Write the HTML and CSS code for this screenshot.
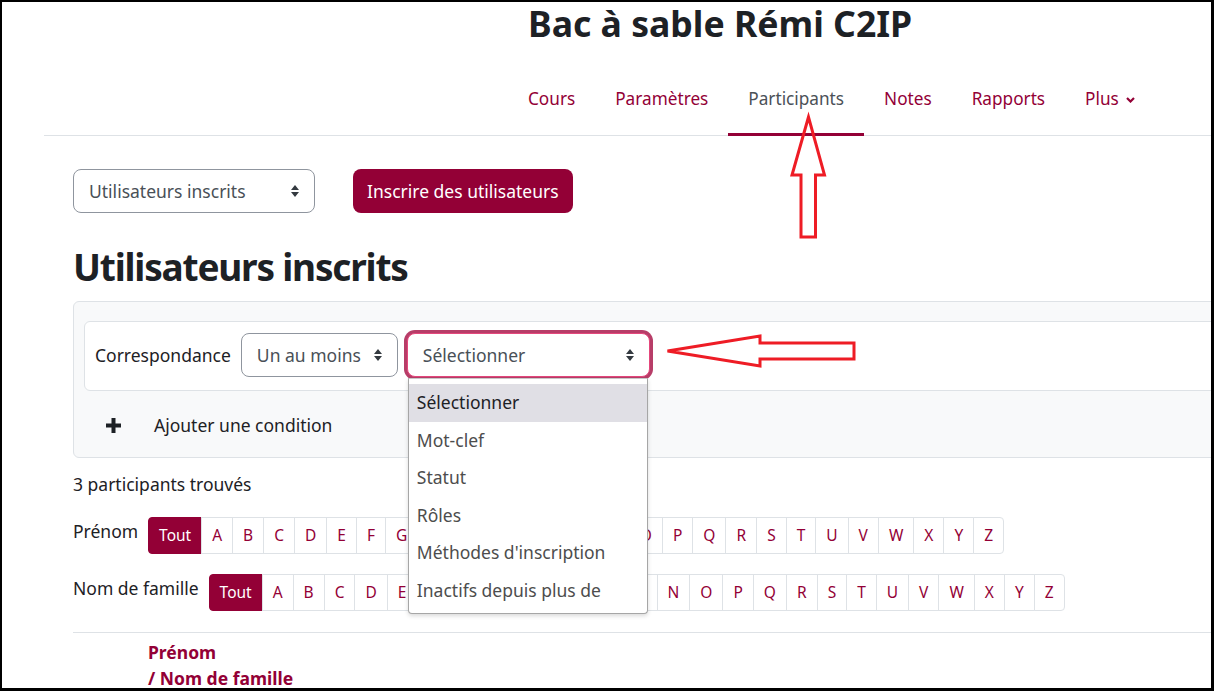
FILE: index.html
```html
<!DOCTYPE html>
<html lang="fr">
<head>
  <meta charset="UTF-8">
  <title>Participants : Bac à sable Rémi C2IP</title>
  <link rel="stylesheet" href="styles.css">
</head>
<body>
  <div class="frame">
    <header class="page-header">
      <h1>Bac à sable Rémi C2IP</h1>
      <nav class="secondary-nav">
        <a href="#">Cours</a>
        <a href="#">Paramètres</a>
        <a href="#" class="active">Participants</a>
        <a href="#">Notes</a>
        <a href="#">Rapports</a>
        <a href="#">Plus <svg class="chevron" width="9" height="6" viewBox="0 0 9 6"><path d="M1 1l3.5 3.5L8 1" fill="none" stroke="currentColor" stroke-width="2.2"/></svg></a>
      </nav>
    </header>

    <main class="content">
      <div class="toolbar">
        <div class="select select-enrol">Utilisateurs inscrits <svg class="updown" width="8" height="12" viewBox="0 0 8 12"><path d="M0 5L4 0l4 5zM0 7h8l-4 5z"/></svg></div>
        <button class="btn-primary">Inscrire des utilisateurs</button>
      </div>

      <h2>Utilisateurs inscrits</h2>

      <div class="filter-panel">
        <div class="filter-row">
          <span class="filter-label">Correspondance</span>
          <div class="select select-match">Un au moins <svg class="updown" width="8" height="12" viewBox="0 0 8 12"><path d="M0 5L4 0l4 5zM0 7h8l-4 5z"/></svg></div>
          <div class="select-wrap">
            <div class="select select-type focused">Sélectionner <svg class="updown" width="8" height="12" viewBox="0 0 8 12"><path d="M0 5L4 0l4 5zM0 7h8l-4 5z"/></svg></div>
            <ul class="dropdown">
              <li class="hover">Sélectionner</li>
              <li>Mot-clef</li>
              <li>Statut</li>
              <li>Rôles</li>
              <li>Méthodes d'inscription</li>
              <li>Inactifs depuis plus de</li>
            </ul>
          </div>
        </div>
        <div class="add-row">
          <svg class="plus" width="15" height="15" viewBox="0 0 15 15"><path d="M5.5 0h4v5.5H15v4H9.5V15h-4V9.5H0v-4h5.5z"/></svg>
          <span>Ajouter une condition</span>
        </div>
      </div>

      <p class="count">3 participants trouvés</p>

      <div class="initialbar">
        <span class="bar-label">Prénom</span>
        <ul class="letters">
          <li class="current">Tout</li><li>A</li><li>B</li><li>C</li><li>D</li><li>E</li><li>F</li><li>G</li><li>H</li><li>I</li><li>J</li><li>K</li><li>L</li><li>M</li><li>N</li><li>O</li><li>P</li><li>Q</li><li>R</li><li>S</li><li>T</li><li>U</li><li>V</li><li>W</li><li>X</li><li>Y</li><li>Z</li>
        </ul>
      </div>
      <div class="initialbar">
        <span class="bar-label">Nom de famille</span>
        <ul class="letters">
          <li class="current">Tout</li><li>A</li><li>B</li><li>C</li><li>D</li><li>E</li><li>F</li><li>G</li><li>H</li><li>I</li><li>J</li><li>K</li><li>L</li><li>M</li><li>N</li><li>O</li><li>P</li><li>Q</li><li>R</li><li>S</li><li>T</li><li>U</li><li>V</li><li>W</li><li>X</li><li>Y</li><li>Z</li>
        </ul>
      </div>

      <div class="table-head">
        <a href="#">Prénom</a><br>
        / <a href="#">Nom de famille</a>
      </div>
    </main>

    <!-- annotations drawn over the screenshot -->
    <svg class="annotations" width="1214" height="691" viewBox="0 0 1214 691">
      <path d="M808.5 117L792 175H801V237H815.5V175H824.5Z" />
      <path d="M667.5 351L760 336V343H854V359H760V366Z" />
    </svg>
  </div>
</body>
</html>
```

FILE: styles.css
```css
* { box-sizing: border-box; }
body {
  margin: 0;
  background: #fff;
  font-family: "Noto Sans", "Open Sans", sans-serif;
  font-size: 17.5px;
  line-height: 27px;
  color: #1d2125;
}
a { color: #930036; text-decoration: none; }

.frame {
  position: relative;
  width: 1214px; height: 691px;
  border: solid #000; border-width: 2px 3px 3px 2px;
  overflow: hidden;
}

/* header + secondary navigation */
.page-header {
  margin-left: 42px;
  padding-left: 484px;
  border-bottom: 1px solid #dee2e6;
}
.page-header h1 {
  margin: 0;
  font-size: 35.6px; line-height: 42px; font-weight: 700;
}
.secondary-nav { display: flex; margin: 31px 0 -1px -20px; font-size: 17.2px; }
.secondary-nav a {
  padding: 10px 20px 21px;
  border-bottom: 3px solid transparent;
}
.secondary-nav a.active { color: #4b5157; border-bottom-color: #930036; }
.chevron { margin-left: 3px; vertical-align: 2px; }

/* page body */
.content { margin-left: 71px; width: 1250px; padding-top: 33px; }
.toolbar { display: flex; gap: 38px; }

.select {
  display: flex; align-items: center; justify-content: space-between;
  height: 44px; padding: 0 15px;
  border: 1px solid #8f959e; border-radius: 8px;
  background: #fff; color: #495057;
}
.updown { fill: #343a40; flex-shrink: 0; }
.select-enrol { width: 242px; }
.select-match { width: 157px; }
.select-type { width: 243px; }
.select.focused {
  border-color: #e4477c;
  box-shadow: 0 0 0 3px #b73d68;
}

.btn-primary {
  height: 44px; padding: 0 14px;
  border: none; border-radius: 8px;
  background: #930036; color: #fff;
  font: inherit;
}

h2 {
  margin: 30px 0 10px;
  font-size: 37px; line-height: 48px; font-weight: 700;
  letter-spacing: -1.2px;
}

.filter-panel {
  padding: 19px 0 0 10px;
  background: #f8f9fa;
  border: 1px solid #dee2e6; border-radius: 6px;
}
.filter-row {
  display: flex; align-items: center; gap: 10px;
  height: 70px; padding: 0 10px 2px;
  background: #fff;
  border: 1px solid #dee2e6; border-radius: 6px;
}
.select-wrap { position: relative; margin-left: -1px; }
.dropdown {
  position: absolute; left: 1px; top: 45px; z-index: 2;
  width: 240px; margin: 0; padding: 5px 0 4px;
  list-style: none;
  background: #fff;
  border: 1px solid #a6a6a6; border-top-color: #c8c8c8;
  border-radius: 0 0 4px 4px;
  box-shadow: 0 2px 4px rgba(0, 0, 0, 0.15);
  color: #4d4d4d;
}
.dropdown li { padding: 5.25px 8px; white-space: nowrap; }
.dropdown li.hover { background: #e0dfe5; color: #1d2125; }

.add-row {
  display: flex; align-items: center; gap: 33px;
  padding: 21px 0 18px 22px;
}
.plus { fill: #1d2125; }

.count { margin: 13px 0 0; }

/* initials bars */
.initialbar { display: flex; align-items: flex-start; margin-top: 19px; }
.initialbar + .initialbar { margin-top: 20.3px; }
.bar-label { padding-top: 1px; margin-right: 10px; }
.letters { display: flex; margin: 0; padding: 0; list-style: none; font-size: 15.5px; }
.letters li {
  padding: 5px 10px; line-height: 24.7px;
  border: 1px solid #dee2e6; margin-left: -1px;
  color: #930036; background: #fff;
}
.letters li:first-child { margin-left: 0; border-radius: 4px 0 0 4px; }
.letters li:last-child { border-radius: 0 4px 4px 0; }
.letters li.current { background: #930036; border-color: #930036; color: #fff; }

.table-head {
  margin-top: 21px; padding: 6px 0 0 75px;
  border-top: 1px solid #dee2e6;
  font-weight: 700; line-height: 26.5px; color: #930036;
}

.annotations {
  position: absolute; left: -2px; top: -2px;
  fill: none; stroke: #ee1c25; stroke-width: 3;
  pointer-events: none; z-index: 5;
}
```
